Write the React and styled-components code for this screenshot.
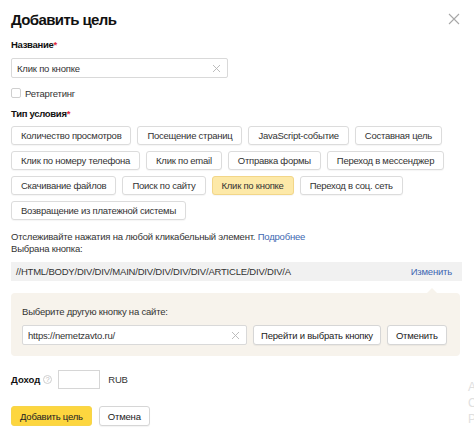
import React from "react";
import styled, { createGlobalStyle } from "styled-components";

const Global = createGlobalStyle`
  html, body { margin: 0; padding: 0; background: #fff; }
  body { font-family: "Liberation Sans", Arial, sans-serif; color: #222; letter-spacing: -0.2px; }
  * { box-sizing: border-box; }
`;

const Page = styled.div`
  position: relative;
  width: 474px;
  height: 433px;
  overflow: hidden;
  padding: 9px 12px 0 11px;
`;

const Header = styled.div`
  display: flex;
  justify-content: space-between;
  align-items: center;
  height: 20px;
`;

const Title = styled.h1`
  margin: 0;
  font-size: 15px;
  font-weight: 700;
  color: #111;
  letter-spacing: -0.6px;
`;

const Close = styled.button`
  border: 0;
  background: none;
  padding: 0;
  width: 12px;
  height: 12px;
  margin-right: 2px;
  display: flex;
  svg { display: block; }
`;

const Label = styled.div`
  font-size: 9.5px;
  font-weight: 700;
  color: #111;
  margin-top: ${(p) => p.$mt || 0}px;
  line-height: 12px;
  letter-spacing: -0.3px;
  span { color: #e0283a; }
`;

const InputBox = styled.div`
  display: flex;
  flex-shrink: 0;
  align-items: center;
  width: ${(p) => p.$w}px;
  height: 20px;
  border: 1px solid #d9d9d9;
  border-radius: 2px;
  background: #fff;
  padding: 0 6px 0 5px;
  margin-top: ${(p) => p.$mt || 0}px;
  font-size: 9.5px;
  color: #333;
`;

const InputText = styled.div`
  flex: 1;
  white-space: nowrap;
`;

const ClearX = () => (
  <svg width="9" height="9" viewBox="0 0 9 9">
    <path d="M1 1L8 8M8 1L1 8" stroke="#b5b5b5" strokeWidth="0.9" />
  </svg>
);

const CheckRow = styled.label`
  display: flex;
  align-items: center;
  gap: 4px;
  margin-top: 10px;
  font-size: 9.5px;
  color: #333;
  height: 10px;
`;

const CheckBox = styled.span`
  width: 10px;
  height: 10px;
  border: 1px solid #cfcfcf;
  border-radius: 2px;
  background: #fff;
`;

const ChipGrid = styled.div`
  display: flex;
  flex-direction: column;
  gap: 6px;
  margin-top: 6px;
`;

const ChipRow = styled.div`
  display: flex;
  gap: 6px;
`;

const Chip = styled.div`
  height: 19px;
  display: flex;
  align-items: center;
  padding: 0 9px;
  border: 1px solid ${(p) => (p.$active ? "#f2d689" : "#dcdcdc")};
  background: ${(p) => (p.$active ? "#fde9a8" : "#fff")};
  border-radius: 3px;
  font-size: 9.5px;
  letter-spacing: -0.25px;
  color: #333;
  white-space: nowrap;
  box-shadow: 0 1px 1px rgba(0, 0, 0, 0.04);
`;

const Hint = styled.div`
  margin-top: 11px;
  font-size: 9.5px;
  line-height: 11.5px;
  color: #333;
  a { color: #3e67b1; text-decoration: none; }
`;

const PathBox = styled.div`
  margin-top: 8px;
  height: 19px;
  width: 451px;
  background: #f1f1f1;
  display: flex;
  justify-content: space-between;
  align-items: center;
  padding: 0 10px 0 5px;
  font-size: 9.5px;
  color: #333;
  a { color: #3e67b1; text-decoration: none; }
`;

const Panel = styled.div`
  position: relative;
  margin-top: 12px;
  width: 449px;
  height: 63px;
  background: #f7f3ec;
  border-radius: 4px;
  padding: 13px 11px 0 11px;
  &::before {
    content: "";
    position: absolute;
    top: -5px;
    right: 23px;
    width: 0;
    height: 0;
    border-left: 5px solid transparent;
    border-right: 5px solid transparent;
    border-bottom: 5px solid #f7f3ec;
  }
`;

const PanelLabel = styled.div`
  font-size: 9.5px;
  color: #333;
  line-height: 11px;
`;

const PanelRow = styled.div`
  display: flex;
  gap: 6px;
  margin-top: 8px;
  align-items: center;
`;

const Button = styled.button`
  flex-shrink: 0;
  height: 20px;
  padding: 0 ${(p) => p.$px || 9}px;
  border: 1px solid ${(p) => (p.$primary ? "#f7d54a" : "#d6d6d6")};
  background: ${(p) => (p.$primary ? "#fdd63f" : "#fff")};
  border-radius: 3px;
  font-family: inherit;
  letter-spacing: -0.2px;
  font-size: 9.5px;
  color: #222;
  white-space: nowrap;
  box-shadow: ${(p) => (p.$primary ? "none" : "0 1px 1px rgba(0,0,0,0.05)")};
`;

const IncomeRow = styled.div`
  display: flex;
  align-items: center;
  margin-top: 14px;
  height: 19px;
`;

const IncomeLabel = styled.div`
  font-size: 9.5px;
  font-weight: 700;
  color: #111;
  letter-spacing: 0;
`;

const Help = styled.span`
  width: 9px;
  height: 9px;
  border: 1px solid #cfcfcf;
  border-radius: 50%;
  color: #bbb;
  font-size: 7px;
  line-height: 7px;
  display: inline-flex;
  align-items: center;
  justify-content: center;
  margin-left: 3px;
`;

const SmallInput = styled.div`
  width: 42px;
  height: 19px;
  border: 1px solid #d6d6d6;
  margin-left: 6px;
  margin-right: 8px;
  background: #fff;
`;

const Currency = styled.span`
  font-size: 9.5px;
  color: #333;
`;

const Footer = styled.div`
  display: flex;
  gap: 7px;
  margin-top: 17px;
`;

const SideLetters = styled.div`
  position: absolute;
  left: 468px;
  top: 381px;
  display: flex;
  flex-direction: column;
  gap: 3px;
  font-size: 12px;
  line-height: 13px;
  color: #e0e0e0;
`;

const rows = [
  [["Количество просмотров"], ["Посещение страниц"], ["JavaScript-событие"], ["Составная цель"]],
  [["Клик по номеру телефона"], ["Клик по email"], ["Отправка формы"], ["Переход в мессенджер"]],
  [["Скачивание файлов"], ["Поиск по сайту"], ["Клик по кнопке", true], ["Переход в соц. сеть"]],
  [["Возвращение из платежной системы"]],
];

export default function App() {
  return (
    <>
      <Global />
      <Page>
        <Header>
          <Title>Добавить цель</Title>
          <Close aria-label="Закрыть">
            <svg width="12" height="12" viewBox="0 0 12 12">
              <path d="M1 1L11 11M11 1L1 11" stroke="#a8a8a8" strokeWidth="1.1" />
            </svg>
          </Close>
        </Header>

        <Label $mt={10}>
          Название<span>*</span>
        </Label>
        <InputBox $w={217} $mt={7}>
          <InputText>Клик по кнопке</InputText>
          <ClearX />
        </InputBox>

        <CheckRow>
          <CheckBox />
          Ретаргетинг
        </CheckRow>

        <Label $mt={10}>
          Тип условия<span>*</span>
        </Label>
        <ChipGrid>
          {rows.map((row, i) => (
            <ChipRow key={i}>
              {row.map(([t, a]) => (
                <Chip key={t} $active={a}>
                  {t}
                </Chip>
              ))}
            </ChipRow>
          ))}
        </ChipGrid>

        <Hint>
          Отслеживайте нажатия на любой кликабельный элемент. <a href="#">Подробнее</a>
          <br />
          Выбрана кнопка:
        </Hint>

        <PathBox>
          <span>//HTML/BODY/DIV/DIV/MAIN/DIV/DIV/DIV/DIV/ARTICLE/DIV/DIV/A</span>
          <a href="#">Изменить</a>
        </PathBox>

        <Panel>
          <PanelLabel>Выберите другую кнопку на сайте:</PanelLabel>
          <PanelRow>
            <InputBox $w={225}>
              <InputText>https://nemetzavto.ru/</InputText>
              <ClearX />
            </InputBox>
            <Button $px={7}>Перейти и выбрать кнопку</Button>
            <Button $px={8}>Отменить</Button>
          </PanelRow>
        </Panel>

        <IncomeRow>
          <IncomeLabel>Доход</IncomeLabel>
          <Help>?</Help>
          <SmallInput />
          <Currency>RUB</Currency>
        </IncomeRow>

        <Footer>
          <Button $primary $px={8}>Добавить цель</Button>
          <Button $px={8}>Отмена</Button>
        </Footer>

        <SideLetters>
          <span>А</span>
          <span>С</span>
          <span>Р</span>
        </SideLetters>
      </Page>
    </>
  );
}
